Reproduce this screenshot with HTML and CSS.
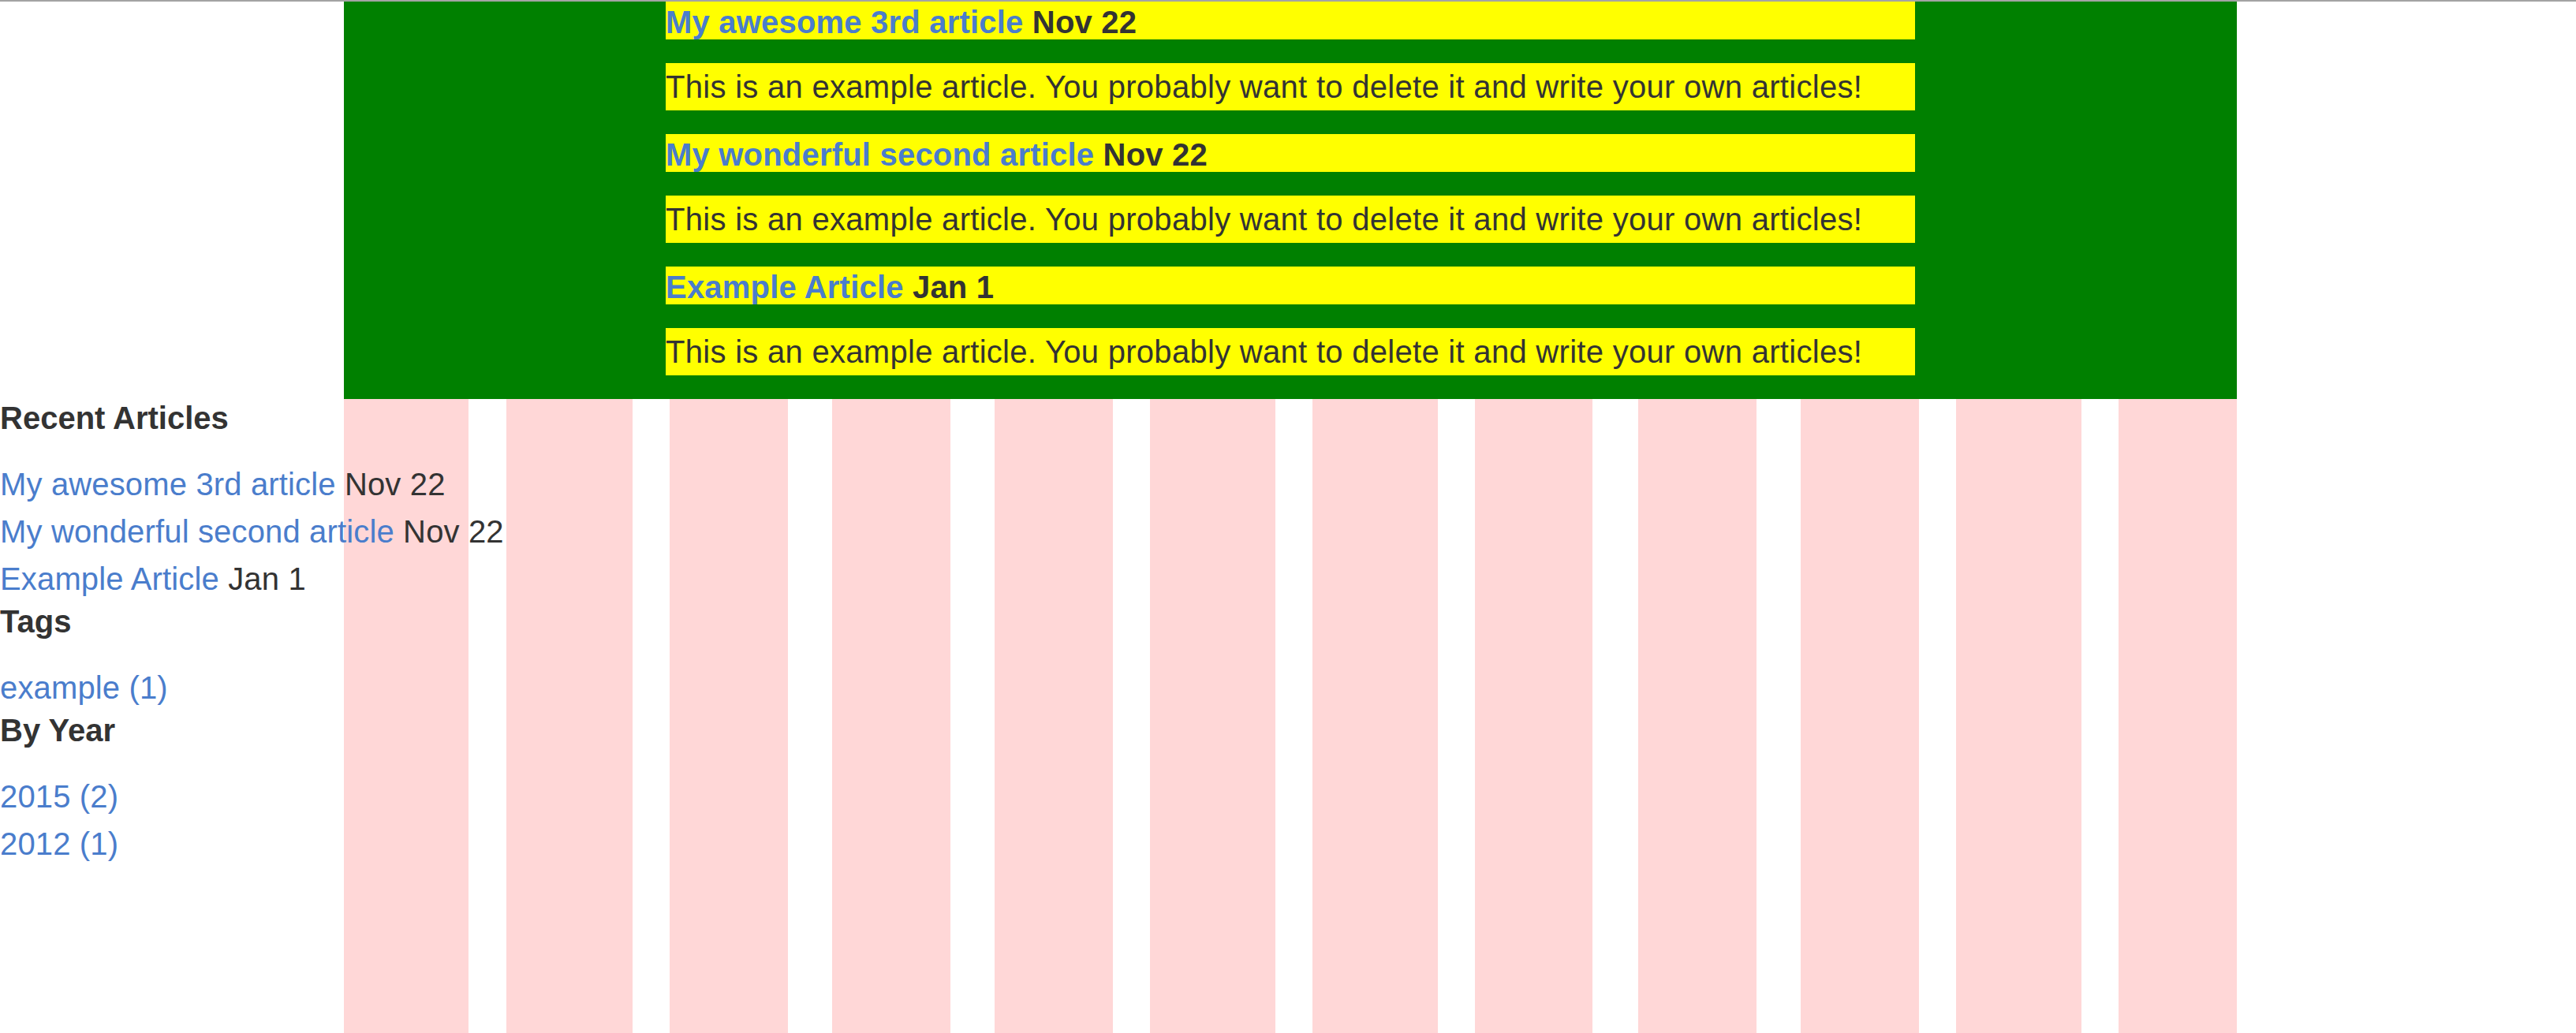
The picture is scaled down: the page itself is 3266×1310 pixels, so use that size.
FILE: index.html
```html
<!DOCTYPE html>
<html lang="en">
<head>
<meta charset="utf-8">
<title>Blog</title>
<link rel="stylesheet" href="styles.css">
</head>
<body class="body">
<div class="page">
  <main class="main">
    <h2 class="entry-title"><a class="link" href="#">My awesome 3rd article</a> Nov 22</h2>
    <p class="entry-text">This is an example article. You probably want to delete it and write your own articles!</p>
    <h2 class="entry-title"><a class="link" href="#">My wonderful second article</a> Nov 22</h2>
    <p class="entry-text">This is an example article. You probably want to delete it and write your own articles!</p>
    <h2 class="entry-title"><a class="link" href="#">Example Article</a> Jan 1</h2>
    <p class="entry-text">This is an example article. You probably want to delete it and write your own articles!</p>
  </main>
  <aside class="sidebar">
    <h3 class="side-title">Recent Articles</h3>
    <ul class="side-list">
      <li class="side-item"><a class="link" href="#">My awesome 3rd article</a> Nov 22</li>
      <li class="side-item"><a class="link" href="#">My wonderful second article</a> Nov 22</li>
      <li class="side-item"><a class="link" href="#">Example Article</a> Jan 1</li>
    </ul>
    <h3 class="side-title">Tags</h3>
    <ul class="side-list">
      <li class="side-item"><a class="link" href="#">example (1)</a></li>
    </ul>
    <h3 class="side-title">By Year</h3>
    <ul class="side-list">
      <li class="side-item"><a class="link" href="#">2015 (2)</a></li>
      <li class="side-item"><a class="link" href="#">2012 (1)</a></li>
    </ul>
  </aside>
</div>
</body>
</html>
```
FILE: styles.css
```css
.body {
  margin: 0;
  border-top: 2px solid #a3a3a3;
  font-family: "Liberation Sans", Arial, Helvetica, sans-serif;
  font-size: 40px;
  color: #333333;
  background: #ffffff;
}

.page {
  min-height: calc(100vh - 2px);
  background-color: #ffffff;
  background-image: linear-gradient(to right,
    #ffd7d7 0 158px, transparent 158px 206px,
    #ffd7d7 206px 366px, transparent 366px 413px,
    #ffd7d7 413px 563px, transparent 563px 619px,
    #ffd7d7 619px 769px, transparent 769px 825px,
    #ffd7d7 825px 975px, transparent 975px 1022px,
    #ffd7d7 1022px 1181px, transparent 1181px 1228px,
    #ffd7d7 1228px 1387px, transparent 1387px 1434px,
    #ffd7d7 1434px 1583px, transparent 1583px 1641px,
    #ffd7d7 1641px 1791px, transparent 1791px 1847px,
    #ffd7d7 1847px 1997px, transparent 1997px 2044px,
    #ffd7d7 2044px 2203px, transparent 2203px 2250px,
    #ffd7d7 2250px 2400px);
  background-size: 2400px 100%;
  background-position: 436px 0;
  background-repeat: no-repeat;
}

.main {
  display: flow-root;
  width: 2400px;
  margin-left: 436px;
  background: #008000;
}

.entry-title {
  margin: 0 17% 30px;
  padding-top: 2px;
  height: 46px;
  background: #ffff00;
  font-size: 40px;
  line-height: 48px;
  font-weight: bold;
  letter-spacing: 0.2px;
}

.entry-text {
  margin: 0 17% 30px;
  background: #ffff00;
  line-height: 60px;
  letter-spacing: 0.29px;
}

.link {
  color: #4a7dcc;
  text-decoration: none;
}

.sidebar {
  display: flow-root;
}

.side-title {
  margin: 0 0 30px;
  font-size: 40px;
  line-height: 48px;
  font-weight: bold;
}

.side-list {
  list-style: none;
  margin: 0;
  padding: 0;
}

.side-item {
  line-height: 60px;
  white-space: nowrap;
  letter-spacing: 0.15px;
}
```
